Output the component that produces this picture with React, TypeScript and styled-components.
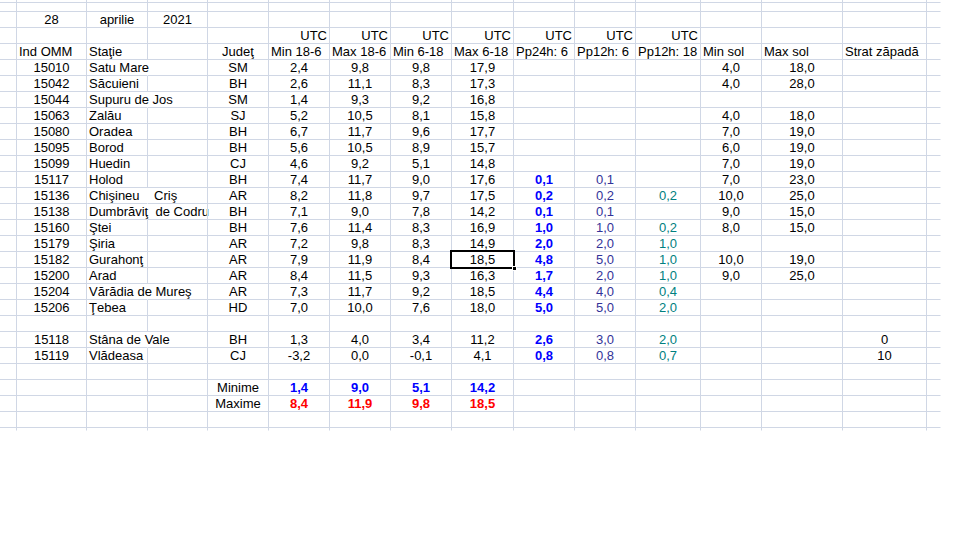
import React from "react";
import styled, { createGlobalStyle } from "styled-components";

const GRID = "#d0d7e5";

const GlobalStyle = createGlobalStyle`
  html, body { margin: 0; padding: 0; background: #ffffff; }
  body {
    font-family: "Liberation Sans", Arial, sans-serif;
    font-size: 13px;
    color: #000000;
  }
`;

const COLS = [17, 70, 61, 60, 61, 61, 61, 61, 62, 61, 61, 65, 61, 81, 84, 14];

const Sheet = styled.div`
  display: grid;
  grid-template-columns: ${COLS.map((w) => `${w}px`).join(" ")};
  grid-template-rows: 3px 9px repeat(26, 16px) 3px;
  width: 940px;
`;

type Align = "left" | "center" | "right";
type Tone = "plain" | "blue" | "red" | "indigo" | "teal";

const TONES: Record<Tone, string> = {
  plain: "#000000",
  blue: "#0000ff",
  red: "#ff0000",
  indigo: "#333399",
  teal: "#008080",
};

const Cell = styled.div<{
  $align: Align;
  $tone: Tone;
  $bold: boolean;
  $noRight: boolean;
  $noBottom: boolean;
  $selected: boolean;
}>`
  position: relative;
  box-sizing: border-box;
  min-width: 0;
  padding: 0 2px;
  border-right: 1px solid ${(p) => (p.$noRight ? "transparent" : GRID)};
  border-bottom: 1px solid ${(p) => (p.$noBottom ? "transparent" : GRID)};
  line-height: 16px;
  white-space: pre;
  overflow: visible;
  text-align: ${(p) => p.$align};
  color: ${(p) => TONES[p.$tone]};
  font-weight: ${(p) => (p.$bold ? 700 : 400)};
  z-index: ${(p) => (p.$selected ? 2 : 1)};

  ${(p) =>
    p.$selected &&
    `
    &::after {
      content: "";
      position: absolute;
      left: -2px;
      top: -2px;
      right: -2px;
      bottom: -2px;
      border: 2px solid #000000;
      pointer-events: none;
    }
    &::before {
      content: "";
      position: absolute;
      right: -4px;
      bottom: -4px;
      width: 5px;
      height: 5px;
      background: #000000;
      border: 1px solid #ffffff;
      box-sizing: border-box;
      z-index: 3;
    }
  `}
`;

type Spec = {
  text?: string;
  align?: Align;
  tone?: Tone;
  bold?: boolean;
  spill?: boolean;
  selected?: boolean;
};

type Station = {
  id: string;
  name: string;
  county: string;
  t: [string, string, string, string];
  pp24?: string;
  pp6?: string;
  pp18?: string;
  minSol?: string;
  maxSol?: string;
  snow?: string;
  selectedMax?: boolean;
};

const MAIN: Station[] = [
  { id: "15010", name: "Satu Mare", county: "SM", t: ["2,4", "9,8", "9,8", "17,9"], minSol: "4,0", maxSol: "18,0" },
  { id: "15042", name: "Săcuieni", county: "BH", t: ["2,6", "11,1", "8,3", "17,3"], minSol: "4,0", maxSol: "28,0" },
  { id: "15044", name: "Supuru de Jos", county: "SM", t: ["1,4", "9,3", "9,2", "16,8"] },
  { id: "15063", name: "Zalău", county: "SJ", t: ["5,2", "10,5", "8,1", "15,8"], minSol: "4,0", maxSol: "18,0" },
  { id: "15080", name: "Oradea", county: "BH", t: ["6,7", "11,7", "9,6", "17,7"], minSol: "7,0", maxSol: "19,0" },
  { id: "15095", name: "Borod", county: "BH", t: ["5,6", "10,5", "8,9", "15,7"], minSol: "6,0", maxSol: "19,0" },
  { id: "15099", name: "Huedin", county: "CJ", t: ["4,6", "9,2", "5,1", "14,8"], minSol: "7,0", maxSol: "19,0" },
  { id: "15117", name: "Holod", county: "BH", t: ["7,4", "11,7", "9,0", "17,6"], pp24: "0,1", pp6: "0,1", minSol: "7,0", maxSol: "23,0" },
  { id: "15136", name: "Chişineu    Criş", county: "AR", t: ["8,2", "11,8", "9,7", "17,5"], pp24: "0,2", pp6: "0,2", pp18: "0,2", minSol: "10,0", maxSol: "25,0" },
  { id: "15138", name: "Dumbrăviţ  de Codru", county: "BH", t: ["7,1", "9,0", "7,8", "14,2"], pp24: "0,1", pp6: "0,1", minSol: "9,0", maxSol: "15,0" },
  { id: "15160", name: "Ştei", county: "BH", t: ["7,6", "11,4", "8,3", "16,9"], pp24: "1,0", pp6: "1,0", pp18: "0,2", minSol: "8,0", maxSol: "15,0" },
  { id: "15179", name: "Şiria", county: "AR", t: ["7,2", "9,8", "8,3", "14,9"], pp24: "2,0", pp6: "2,0", pp18: "1,0" },
  { id: "15182", name: "Gurahonţ", county: "AR", t: ["7,9", "11,9", "8,4", "18,5"], pp24: "4,8", pp6: "5,0", pp18: "1,0", minSol: "10,0", maxSol: "19,0", selectedMax: true },
  { id: "15200", name: "Arad", county: "AR", t: ["8,4", "11,5", "9,3", "16,3"], pp24: "1,7", pp6: "2,0", pp18: "1,0", minSol: "9,0", maxSol: "25,0" },
  { id: "15204", name: "Vărădia de Mureş", county: "AR", t: ["7,3", "11,7", "9,2", "18,5"], pp24: "4,4", pp6: "4,0", pp18: "0,4" },
  { id: "15206", name: "Ţebea", county: "HD", t: ["7,0", "10,0", "7,6", "18,0"], pp24: "5,0", pp6: "5,0", pp18: "2,0" },
];

const MOUNTAIN: Station[] = [
  { id: "15118", name: "Stâna de Vale", county: "BH", t: ["1,3", "4,0", "3,4", "11,2"], pp24: "2,6", pp6: "3,0", pp18: "2,0", snow: "0" },
  { id: "15119", name: "Vlădeasa", county: "CJ", t: ["-3,2", "0,0", "-0,1", "4,1"], pp24: "0,8", pp6: "0,8", pp18: "0,7", snow: "10" },
];

const HEADERS: [number, string, Align][] = [
  [1, "Ind OMM", "left"],
  [2, "Staţie", "left"],
  [4, "Judeţ", "center"],
  [5, "Min 18-6", "left"],
  [6, "Max 18-6", "left"],
  [7, "Min 6-18", "left"],
  [8, "Max 6-18", "left"],
  [9, "Pp24h: 6", "left"],
  [10, "Pp12h: 6", "left"],
  [11, "Pp12h: 18", "left"],
  [12, "Min sol", "left"],
  [13, "Max sol", "left"],
  [14, "Strat zăpadă", "left"],
];

const emptyRow = (): Spec[] => COLS.map(() => ({}));

const stationRow = (s: Station): Spec[] => {
  const r = emptyRow();
  const c = (text?: string, tone: Tone = "plain", bold = false): Spec => ({ text, align: "center", tone, bold });
  r[1] = c(s.id);
  r[2] = { text: s.name, align: "left", spill: s.name.length > 8 };
  r[4] = c(s.county);
  s.t.forEach((v, i) => (r[5 + i] = c(v)));
  if (s.selectedMax) r[8] = { ...r[8], selected: true };
  r[9] = c(s.pp24, "blue", true);
  r[10] = c(s.pp6, "indigo");
  r[11] = c(s.pp18, "teal");
  r[12] = c(s.minSol);
  r[13] = c(s.maxSol);
  r[14] = c(s.snow);
  return r;
};

const summaryRow = (label: string, values: string[], tone: Tone): Spec[] => {
  const r = emptyRow();
  r[4] = { text: label, align: "center" };
  values.forEach((v, i) => (r[5 + i] = { text: v, align: "center", tone, bold: true }));
  return r;
};

const buildRows = (): Spec[][] => {
  const rows: Spec[][] = [];
  rows.push(emptyRow());
  rows.push(emptyRow());
  const date = emptyRow();
  date[1] = { text: "28", align: "center" };
  date[2] = { text: "aprilie", align: "center" };
  date[3] = { text: "2021", align: "center" };
  rows.push(date);
  const utc = emptyRow();
  for (let i = 5; i <= 11; i++) utc[i] = { text: "UTC", align: "right" };
  rows.push(utc);
  const head = emptyRow();
  HEADERS.forEach(([i, t, a]) => (head[i] = { text: t, align: a }));
  rows.push(head);
  MAIN.forEach((s) => rows.push(stationRow(s)));
  rows.push(emptyRow());
  MOUNTAIN.forEach((s) => rows.push(stationRow(s)));
  rows.push(emptyRow());
  rows.push(summaryRow("Minime", ["1,4", "9,0", "5,1", "14,2"], "blue"));
  rows.push(summaryRow("Maxime", ["8,4", "11,9", "9,8", "18,5"], "red"));
  rows.push(emptyRow());
  rows.push(emptyRow());
  return rows;
};

const ROWS = buildRows();

export default function App() {
  const last = ROWS.length - 1;
  return (
    <>
      <GlobalStyle />
      <Sheet>
        {ROWS.map((row, ri) =>
          row.map((cell, ci) => {
            const isEdge = ci === COLS.length - 1;
            const isStub = ri === last;
            return (
              <Cell
                key={`${ri}-${ci}`}
                $align={cell.align ?? "left"}
                $tone={cell.tone ?? "plain"}
                $bold={!!cell.bold}
                $noRight={!!cell.spill || isEdge || (isStub && isEdge)}
                $noBottom={isStub}
                $selected={!!cell.selected}
              >
                {cell.text ?? ""}
              </Cell>
            );
          })
        )}
      </Sheet>
    </>
  );
}
